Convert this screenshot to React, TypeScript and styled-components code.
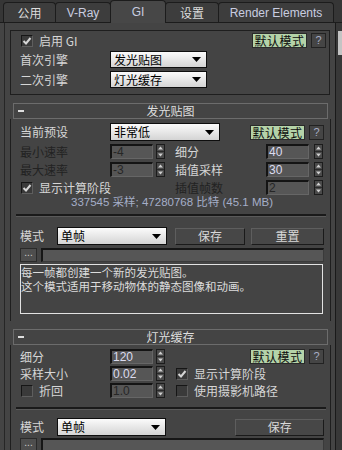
import React from 'react';
import styled, { createGlobalStyle } from 'styled-components';

const GlobalStyle = createGlobalStyle`
  html, body {
    margin: 0;
    padding: 0;
    background: #444444;
  }
  body {
    font-family: "Noto Sans CJK SC", "Liberation Sans", sans-serif;
    font-size: 12px;
  }
`;

const Window = styled.div`
  width: 342px;
  height: 450px;
  overflow: hidden;
  background: #444444;
  color: #d4d4d4;
  display: flex;
  flex-direction: column;
`;

const TabBar = styled.div`
  height: 26px;
  box-sizing: border-box;
  padding-left: 3px;
  display: flex;
  align-items: flex-end;
  background: #363636;
  border-bottom: 1px solid #1c1c1c;
`;

const Tab = styled.div<{ $w: number; $active?: boolean; $latin?: boolean }>`
  width: ${p => p.$w}px;
  height: ${p => (p.$active ? 23 : 20)}px;
  margin-bottom: ${p => (p.$active ? -1 : 0)}px;
  margin-right: -1px;
  box-sizing: border-box;
  border: 1px solid #1c1c1c;
  border-bottom: none;
  border-radius: 4px 4px 0 0;
  background: ${p => (p.$active ? '#474747' : '#3d3d3d')};
  color: ${p => (p.$latin ? '#c9cde0' : '#dcdcdc')};
  font-family: ${p => (p.$latin ? '"Liberation Sans", sans-serif' : '"Noto Sans CJK SC", sans-serif')};
  font-size: 12px;
  display: flex;
  align-items: center;
  justify-content: center;
  position: relative;
  z-index: ${p => (p.$active ? 1 : 0)};
`;

const Body = styled.div`
  flex: 1;
  display: flex;
`;

const Panel = styled.div`
  margin-left: 4px;
  width: 331px;
  box-sizing: border-box;
  border-left: 1px solid #262626;
  padding: 0 4px 0 5px;
  display: flex;
  flex-direction: column;
`;

const ScrollTrack = styled.div`
  width: 7px;
  box-sizing: border-box;
  background: #383838;
  border-left: 1px solid #1a1a1a;
  display: flex;
  flex-direction: column;
  align-items: flex-end;
`;

const ScrollThumb = styled.div`
  margin-top: 8px;
  width: 4px;
  height: 24px;
  background: #c4c4c4;
`;

const TopSection = styled.div`
  margin-top: 7px;
  margin-right: 1px;
  border: 1px solid #1e1e1e;
  padding: 2px 3px 6px 9px;
  display: flex;
  flex-direction: column;
  gap: 3px;
`;

const Rollout = styled.div`
  margin-top: 8px;
  display: flex;
  flex-direction: column;
`;

const RolloutHeader = styled.div`
  margin: 0 3px;
  height: 16px;
  box-sizing: border-box;
  border: 1px solid #6c6c6c;
  display: grid;
  grid-template-columns: 1fr auto 1fr;
  align-items: center;
  line-height: 14px;
  color: #dedede;
  font-size: 12px;
`;

const Minus = styled.span`
  justify-self: start;
  margin-left: 4px;
  width: 6px;
  height: 2px;
  background: #dedede;
`;

const RolloutBody = styled.div<{ $pb: number }>`
  border-left: 1px solid #1e1e1e;
  border-right: 1px solid #1e1e1e;
  padding: 0 6px ${p => p.$pb}px 9px;
  display: flex;
  flex-direction: column;
`;

const Row = styled.div<{ $h: number; $mt?: number }>`
  height: ${p => p.$h}px;
  margin-top: ${p => p.$mt ?? 0}px;
  display: flex;
  align-items: center;
`;

const Half = styled.div<{ $w?: number }>`
  width: ${p => (p.$w ? `${p.$w}px` : 'auto')};
  flex: ${p => (p.$w ? 'none' : 1)};
  height: 100%;
  display: flex;
  align-items: center;
`;

const Label = styled.span<{ $w?: number; $dim?: boolean }>`
  width: ${p => (p.$w ? `${p.$w}px` : 'auto')};
  flex: none;
  line-height: 14px;
  white-space: nowrap;
  color: ${p => (p.$dim ? '#222222' : '#d6d6d6')};
`;

const Spacer = styled.div`
  flex: 1;
`;

const Dropdown = styled.div<{ $w: number; $h: number }>`
  width: ${p => p.$w}px;
  height: ${p => p.$h}px;
  box-sizing: border-box;
  border: 1px solid #0e0e0e;
  background: linear-gradient(#fbfbfb, #d4d4d4);
  color: #000;
  padding: 0 5px 0 3px;
  display: flex;
  align-items: center;
  justify-content: space-between;
  line-height: 14px;
`;

const GreenButton = styled.div`
  width: 55px;
  height: 15px;
  box-sizing: border-box;
  border: 1px solid #2a2a2a;
  background: #b4d3a8;
  color: #0c0c0c;
  display: flex;
  align-items: center;
  justify-content: center;
  letter-spacing: 0.5px;
  line-height: 13px;
`;

const HelpButton = styled.div`
  width: 15px;
  height: 15px;
  margin-left: 4px;
  box-sizing: border-box;
  border: 1px solid #222;
  background: #454545;
  color: #a7aec6;
  font: 11px/13px "Liberation Sans", sans-serif;
  text-align: center;
`;

const Field = styled.div<{ $dim?: boolean }>`
  width: 43px;
  height: 15px;
  box-sizing: border-box;
  background: #565656;
  border-top: 2px solid #141414;
  border-left: 2px solid #141414;
  border-right: 1px solid #666;
  border-bottom: 1px solid #666;
  color: ${p => (p.$dim ? '#262626' : '#dcdcef')};
  font: 12px/12px "Liberation Sans", sans-serif;
  padding-left: 1px;
`;

const Arrows = styled.div<{ $gap: number }>`
  margin-left: ${p => p.$gap}px;
  width: 9px;
  height: 15px;
  display: flex;
`;

const Check = styled.div`
  width: 12px;
  height: 12px;
  box-sizing: border-box;
  margin: 0 6px 0 1px;
  background: #3a3a3a;
  border-top: 1px solid #161616;
  border-left: 1px solid #161616;
  border-right: 1px solid #5e5e5e;
  border-bottom: 1px solid #5e5e5e;
  display: flex;
  align-items: center;
  justify-content: center;
`;

const Stats = styled.div`
  margin-top: 1px;
  height: 13px;
  text-align: center;
  color: #a4aec8;
  font-family: "Liberation Sans", "Noto Sans CJK SC", sans-serif;
  font-size: 11.5px;
  line-height: 13px;
`;

const Separator = styled.div<{ $mt: number }>`
  margin-top: ${p => p.$mt}px;
  margin-right: -2px;
  margin-left: -4px;
  height: 3px;
  box-sizing: border-box;
  border-top: 2px solid #1a1a1a;
  border-bottom: 1px solid #5a5a5a;
`;

const PushButton = styled.div<{ $w: number; $ml: number }>`
  width: ${p => p.$w}px;
  height: 17px;
  margin-left: ${p => p.$ml}px;
  box-sizing: border-box;
  background: #474747;
  border-top: 1px solid #5e5e5e;
  border-left: 1px solid #5e5e5e;
  border-right: 1px solid #1a1a1a;
  border-bottom: 1px solid #1a1a1a;
  color: #d8d8d8;
  display: flex;
  align-items: center;
  justify-content: center;
  line-height: 14px;
`;

const DotsButton = styled.div`
  width: 17px;
  height: 14px;
  box-sizing: border-box;
  background: #4e4e4e;
  border: 1px solid #2a2a2a;
  color: #cfcfcf;
  font: 10px/8px "Liberation Sans", sans-serif;
  text-align: center;
`;

const PathField = styled.div`
  flex: 1;
  margin-left: 4px;
  height: 14px;
  box-sizing: border-box;
  background: #565656;
  border-top: 2px solid #161616;
  border-left: 2px solid #161616;
  border-right: 1px solid #3a3a3a;
  border-bottom: 1px solid #3a3a3a;
`;

const InfoBox = styled.div`
  margin-top: 2px;
  margin-right: 1px;
  height: 50px;
  box-sizing: border-box;
  border: 1px solid #e2e2e2;
  padding: 0;
  color: #dcdcdc;
  display: flex;
  flex-direction: column;
  overflow: hidden;
`;

const InfoLine = styled.div`
  height: 14px;
  line-height: 14px;
  font-size: 11.5px;
  white-space: nowrap;
`;

const Arrow = () => (
  <svg width="9" height="5" viewBox="0 0 9 5">
    <polygon points="0,0 9,0 4.5,5" fill="#000" />
  </svg>
);

const CheckMark = ({ on }: { on: boolean }) =>
  on ? (
    <svg width="10" height="10" viewBox="0 0 10 10">
      <path d="M1.5 5 L4 7.5 L8.5 2" stroke="#d6d6d6" strokeWidth="2" fill="none" />
    </svg>
  ) : null;

const SpinArrows = ({ gap }: { gap: number }) => (
  <Arrows $gap={gap}>
    <svg width="9" height="15" viewBox="0 0 9 15">
      <rect x="0.5" y="0.5" width="8" height="14" fill="#4a4a4a" stroke="#1c1c1c" />
      <line x1="1" y1="7.5" x2="8" y2="7.5" stroke="#2a2a2a" />
      <polygon points="4.5,2.5 7,5.5 2,5.5" fill="#cfcfcf" />
      <polygon points="2,9.5 7,9.5 4.5,12.5" fill="#cfcfcf" />
    </svg>
  </Arrows>
);

const CheckBox = ({ on, label }: { on: boolean; label: string }) => (
  <>
    <Check>
      <CheckMark on={on} />
    </Check>
    <Label>{label}</Label>
  </>
);

const Spinner = ({ label, value, w, dimLabel, dimValue, gap }: {
  label: string; value: string; w: number; dimLabel?: boolean; dimValue?: boolean; gap: number;
}) => (
  <>
    <Label $w={w} $dim={dimLabel}>{label}</Label>
    <Field $dim={dimValue}>{value}</Field>
    <SpinArrows gap={gap} />
  </>
);

const Defaults = () => (
  <>
    <Spacer />
    <GreenButton>默认模式</GreenButton>
    <HelpButton>?</HelpButton>
  </>
);

export default function App() {
  return (
    <Window>
      <GlobalStyle />
      <TabBar>
        <Tab $w={53}>公用</Tab>
        <Tab $w={56} $latin>V-Ray</Tab>
        <Tab $w={56} $active $latin>GI</Tab>
        <Tab $w={54}>设置</Tab>
        <Tab $w={116} $latin>Render Elements</Tab>
      </TabBar>
      <Body>
        <Panel>
          <TopSection>
            <Row $h={15}>
              <CheckBox on label="启用 GI" />
              <Defaults />
            </Row>
            <Row $h={17}>
              <Label $w={90}>首次引擎</Label>
              <Dropdown $w={97} $h={17}>发光贴图<Arrow /></Dropdown>
            </Row>
            <Row $h={17}>
              <Label $w={90}>二次引擎</Label>
              <Dropdown $w={97} $h={17}>灯光缓存<Arrow /></Dropdown>
            </Row>
          </TopSection>

          <Rollout>
            <RolloutHeader>
              <Minus />
              <span>发光贴图</span>
              <span />
            </RolloutHeader>
            <RolloutBody $pb={7}>
              <Row $h={18} $mt={4}>
                <Label $w={90}>当前预设</Label>
                <Dropdown $w={110} $h={18}>非常低<Arrow /></Dropdown>
                <Defaults />
              </Row>
              <Row $h={15} $mt={3}>
                <Half $w={155}>
                  <Spinner label="最小速率" value="-4" w={90} dimLabel dimValue gap={3} />
                </Half>
                <Half>
                  <Spinner label="细分" value="40" w={91} gap={5} />
                </Half>
              </Row>
              <Row $h={15} $mt={3}>
                <Half $w={155}>
                  <Spinner label="最大速率" value="-3" w={90} dimLabel dimValue gap={3} />
                </Half>
                <Half>
                  <Spinner label="插值采样" value="30" w={91} gap={5} />
                </Half>
              </Row>
              <Row $h={15} $mt={3}>
                <Half $w={155}>
                  <CheckBox on label="显示计算阶段" />
                </Half>
                <Half>
                  <Spinner label="插值帧数" value="2" w={91} dimLabel dimValue gap={5} />
                </Half>
              </Row>
              <Stats>337545 采样; 47280768 比特 (45.1 MB)</Stats>
              <Separator $mt={5} />
              <Row $h={18} $mt={10}>
                <Label $w={37}>模式</Label>
                <Dropdown $w={110} $h={18}>单帧<Arrow /></Dropdown>
                <PushButton $w={70} $ml={8}>保存</PushButton>
                <PushButton $w={73} $ml={6}>重置</PushButton>
              </Row>
              <Row $h={14} $mt={3}>
                <DotsButton>...</DotsButton>
                <PathField />
              </Row>
              <InfoBox>
                <InfoLine>每一帧都创建一个新的发光贴图。</InfoLine>
                <InfoLine>这个模式适用于移动物体的静态图像和动画。</InfoLine>
              </InfoBox>
            </RolloutBody>
          </Rollout>

          <Rollout>
            <RolloutHeader>
              <Minus />
              <span>灯光缓存</span>
              <span />
            </RolloutHeader>
            <RolloutBody $pb={0}>
              <Row $h={15} $mt={4}>
                <Half $w={155}>
                  <Spinner label="细分" value="120" w={90} gap={3} />
                </Half>
                <Defaults />
              </Row>
              <Row $h={15} $mt={2}>
                <Half $w={155}>
                  <Spinner label="采样大小" value="0.02" w={90} gap={3} />
                </Half>
                <Half>
                  <CheckBox on label="显示计算阶段" />
                </Half>
              </Row>
              <Row $h={15} $mt={2}>
                <Half $w={155}>
                  <Check>
                    <CheckMark on={false} />
                  </Check>
                  <Label $w={71}>折回</Label>
                  <Field $dim>1.0</Field>
                  <SpinArrows gap={3} />
                </Half>
                <Half>
                  <CheckBox on={false} label="使用摄影机路径" />
                </Half>
              </Row>
              <Separator $mt={9} />
              <Row $h={18} $mt={8}>
                <Label $w={37}>模式</Label>
                <Dropdown $w={110} $h={18}>单帧<Arrow /></Dropdown>
                <PushButton $w={89} $ml={69}>保存</PushButton>
              </Row>
              <Row $h={14} $mt={2}>
                <DotsButton>...</DotsButton>
                <PathField />
              </Row>
            </RolloutBody>
          </Rollout>
        </Panel>
        <ScrollTrack>
          <ScrollThumb />
        </ScrollTrack>
      </Body>
    </Window>
  );
}
